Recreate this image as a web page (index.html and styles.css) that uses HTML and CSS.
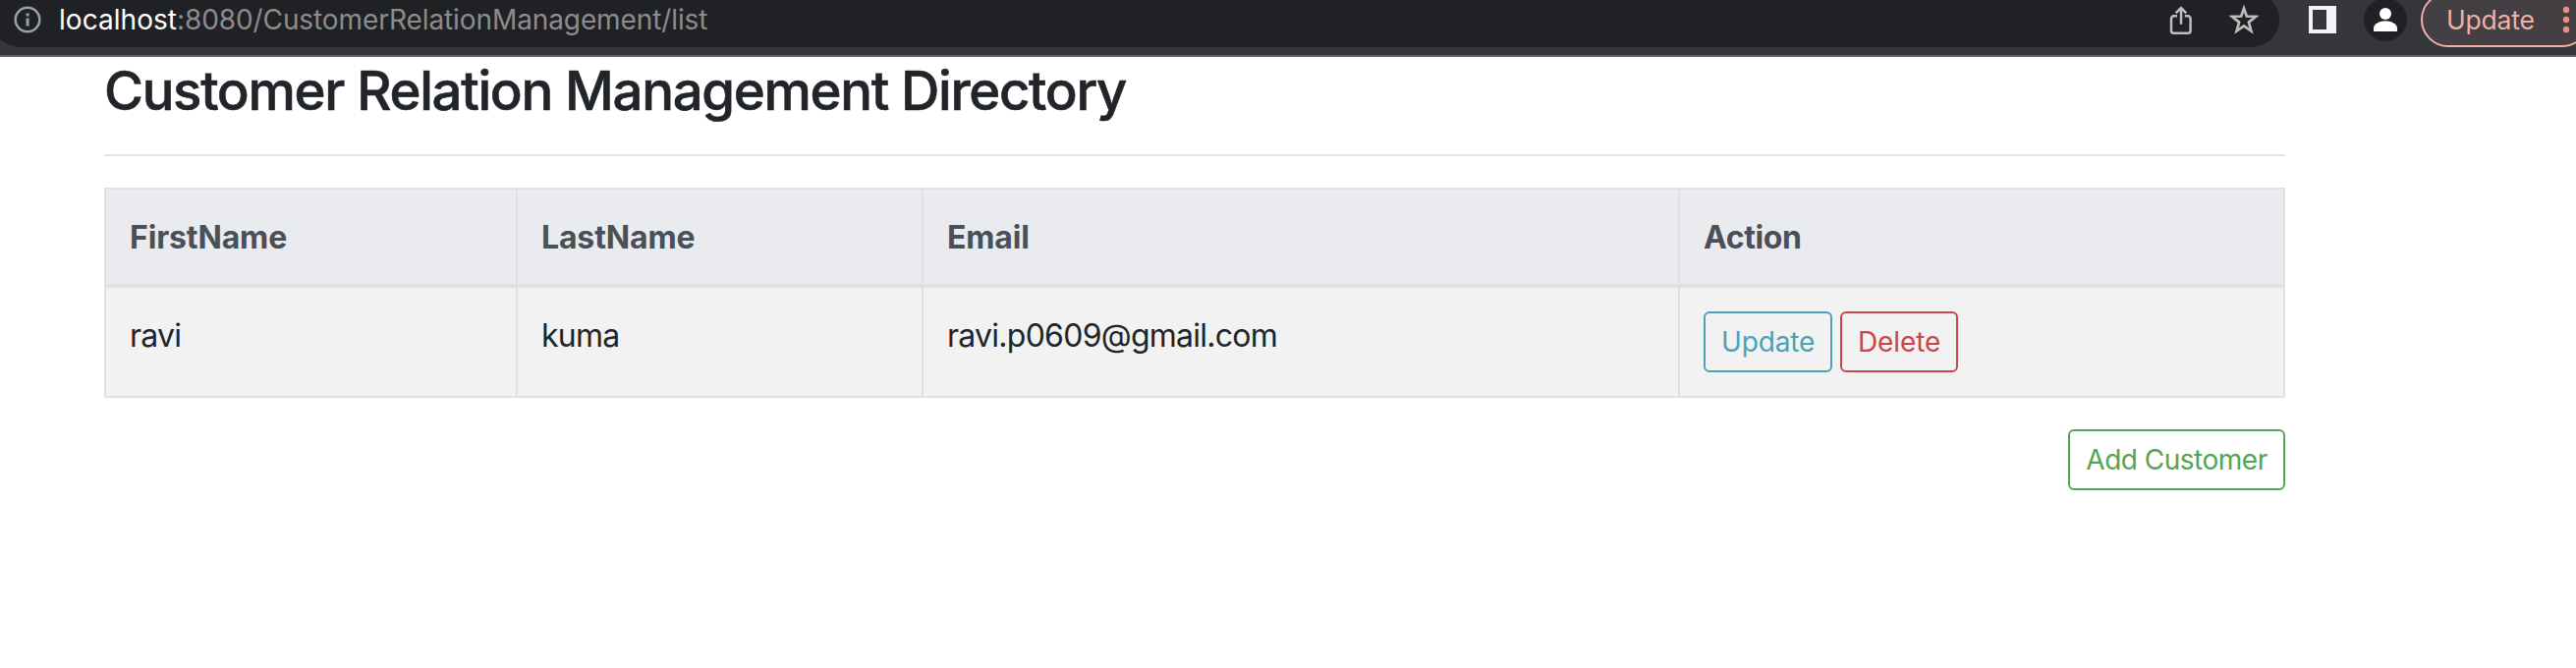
FILE: index.html
```
<!DOCTYPE html>
<html lang="en">
<head>
<meta charset="utf-8">
<title>Customer Relation Management Directory</title>
<link rel="stylesheet" href="styles.css">
</head>
<body>
<header class="toolbar">
  <div class="omnibox">
    <svg class="info-icon" viewBox="0 0 28 28" width="28" height="28"><circle cx="14" cy="14" r="12.3" fill="none" stroke="#9aa0a6" stroke-width="2.5"/><path d="M12.6 7.4h3v3h-3zM12.6 12.4h3v8h-3z" fill="#9aa0a6"/></svg>
    <div class="url"><span class="host">localhost</span><span class="path">:8080/CustomerRelationManagement/list</span></div>
    <svg class="share-icon" viewBox="0 0 24 32" width="24" height="32" fill="none" stroke="#bdbdbd" stroke-width="2.5"><path d="M8 12.3H4.6a2.6 2.6 0 0 0-2.6 2.6V27.2a2.6 2.6 0 0 0 2.6 2.6H19a2.6 2.6 0 0 0 2.6-2.6V14.9A2.6 2.6 0 0 0 19 12.3H15.800M12 20.800V4.500M6.700 9.300L12 4L17.300 9.300"/></svg>
    <svg class="star-icon" viewBox="0 0 32 32" width="32" height="32"><path d="M16 4.500L18.800 12.500L28 13L20.900 18.600L23.400 27.500L16 22.400L8.600 27.500L11.100 18.600L4 13L13.200 12.500Z" fill="none" stroke="#bdbdbd" stroke-width="2.700"/></svg>
  </div>
  <svg class="panel-icon" viewBox="0 0 28 28" width="28" height="28"><path fill="#f1f3f4" fill-rule="evenodd" d="M0 0H28V28H0ZM4 4V24H18V4Z"/></svg>
  <svg class="avatar" viewBox="0 0 44 44" width="44" height="44"><circle cx="22" cy="22" r="22" fill="#202124"/><circle cx="22" cy="16" r="6" fill="#fff"/><path d="M10 34V30.500C10 26 17 23.200 22 23.200S34 26 34 30.500V34Z" fill="#fff"/></svg>
  <div class="update-chip"><span>Update</span>
    <svg viewBox="0 0 8 28" width="8" height="28" fill="#e98e82"><circle cx="4" cy="4" r="3.200"/><circle cx="4" cy="14" r="3.200"/><circle cx="4" cy="24" r="3.200"/></svg>
  </div>
</header>
<main class="container">
  <h2 class="title">Customer Relation Management Directory</h2>
  <hr class="rule">
  <table class="table">
    <colgroup><col class="col-first"><col class="col-last"><col class="col-email"><col class="col-action"></colgroup>
    <thead><tr><th>FirstName</th><th>LastName</th><th>Email</th><th class="th-action">Action</th></tr></thead>
    <tbody><tr><td>ravi</td><td>kuma</td><td class="email">ravi.p0609@gmail.com</td>
      <td><div class="actions"><a class="btn btn-info">Update</a><a class="btn btn-danger">Delete</a></div></td></tr></tbody>
  </table>
  <div class="footer"><a class="btn btn-success">Add Customer</a></div>
</main>
</body>
</html>
```
FILE: styles.css
```
* { box-sizing: border-box; }
body {
  margin: 0;
  height: 680px;
  overflow: hidden;
  background: #fff;
  color: #212529;
  font-family: Inter, "Liberation Sans", sans-serif;
}
svg { display: block; flex: none; }

.toolbar {
  display: flex;
  align-items: flex-start;
  height: 58px;
  overflow: hidden;
  background: #35363a;
  border-bottom: 2px solid #5f6065;
}
.omnibox {
  display: flex;
  align-items: center;
  flex: none;
  width: 2328px;
  height: 56px;
  margin: -8px 0 0 -8px;
  padding-left: 22px;
  border-radius: 28px;
  background: #202124;
}
.url {
  flex: 1;
  padding-left: 18px;
  font-size: 28px;
  line-height: 40px;
  white-space: nowrap;
  color: #8c8c8d;
}
.host { color: #fff; letter-spacing: .04px; }
.path { letter-spacing: -.1px; }
.share-icon { margin-right: 36px; }
.star-icon { margin-right: 20px; }
.panel-icon { margin: 6px 0 0 30px; }
.avatar { margin: -2px 0 0 28px; }
.update-chip {
  display: flex;
  align-items: center;
  justify-content: space-between;
  flex: none;
  width: 172px;
  height: 56px;
  margin: -8px 0 0 14px;
  padding: 0 18px 0 24px;
  border: 2px solid #efb0a8;
  border-radius: 28px;
  background: #433f42;
  color: #efb0a8;
  font-size: 26.5px;
  letter-spacing: -.2px;
}

.container { width: 2220px; margin-left: 106px; }
.title {
  margin: 0;
  padding-top: 1px;
  height: 67px;
  font-size: 54.5px;
  font-weight: 500;
  line-height: 67px;
  letter-spacing: -1.318px;
  white-space: nowrap;
  -webkit-text-stroke: .6px #212529;
}
.rule {
  margin: 32px 0;
  border: 0;
  border-top: 2px solid #e5e5e5;
}
.table {
  width: 2220px;
  table-layout: fixed;
  border-collapse: separate;
  border-spacing: 0;
  border: 2px solid #dee2e6;
  border-width: 2px 0 0 2px;
}
.col-first { width: 419px; }
.col-last { width: 413px; }
.col-email { width: 770px; }
.col-action { width: 616px; }
.table th,
.table td {
  padding: 25px 24px 23px;
  border: 0 solid #dee2e6;
  border-right-width: 2px;
  font-size: 32px;
  line-height: 48px;
  text-align: left;
  vertical-align: top;
}
.table th {
  height: 100px;
  border-bottom-width: 4px;
  background: #eaebef;
  color: #495057;
  font-weight: 700;
  letter-spacing: -.15px;
}
.table .th-action { letter-spacing: -.4px; }
.table td {
  height: 112px;
  border-bottom-width: 2px;
  background: #f2f2f2;
  letter-spacing: -.75px;
}
.table .email { letter-spacing: -.74px; }
.actions { display: flex; gap: 8px; margin: -1px 0 1px; }
.btn {
  height: 62px;
  padding: 0 16px;
  border: 2px solid;
  border-radius: 6px;
  font-size: 28px;
  line-height: 59px;
  text-align: center;
  white-space: nowrap;
}
.btn-info { width: 131px; color: #4aa2b8; letter-spacing: -.14px; }
.btn-danger { width: 120px; color: #cb444a; letter-spacing: -.1px; }
.btn-success { width: 221px; color: #53a551; letter-spacing: -.5px; }
.footer { display: flex; justify-content: flex-end; margin-top: 32px; }
```
